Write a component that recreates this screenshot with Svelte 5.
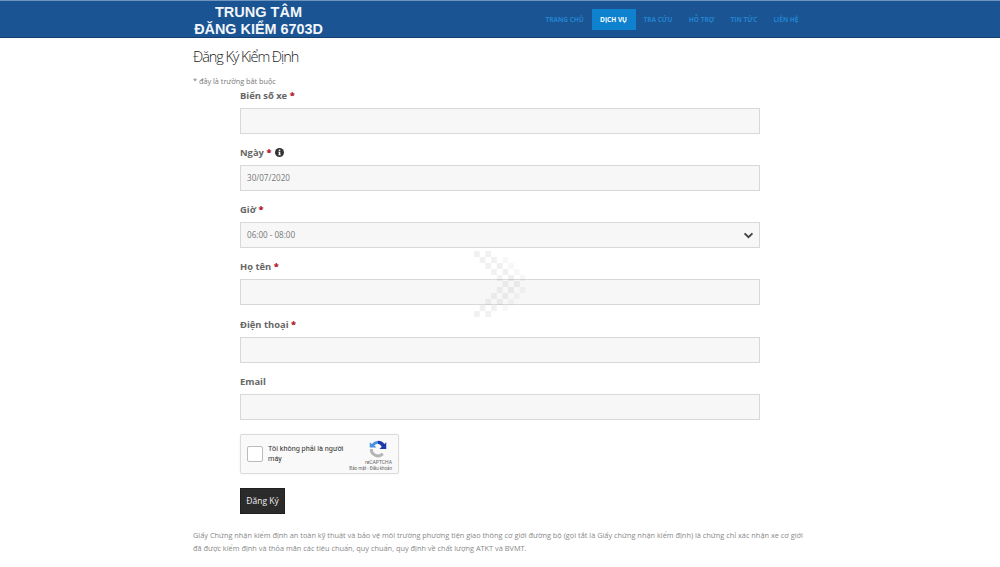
<script>
  const nav = ['TRANG CHỦ', 'DỊCH VỤ', 'TRA CỨU', 'HỖ TRỢ', 'TIN TỨC', 'LIÊN HỆ'];
  const cells = [];
  for (let r = 0; r < 11; r++) {
    for (let c = 0; c < 9; c++) {
      if ((r + c) % 2 === 0) {
        const mid = (r < 6 ? r : 10 - r) * 1.1;
        const edge = Math.abs(c - mid - 1);
        if (edge < 3) cells.push({ x: c * 5.7, y: r * 6, o: 0.15 - edge * 0.03 });
      }
    }
  }
</script>

<header class="topbar">
  <div class="inner">
    <div class="logo"><span class="l1">TRUNG TÂM</span><span>ĐĂNG KIỂM 6703D</span></div>
    <nav>
      {#each nav as item, i}
        <span class="item" class:active={i === 1}>{item}</span>
      {/each}
    </nav>
  </div>
</header>

<main>
  <h1>Đăng Ký Kiểm Định</h1>
  <p class="note">* đây là trường bắt buộc</p>
  <form>
    <div class="group">
      <div class="label">Biển số xe <b>*</b></div>
      <div class="field"></div>
    </div>
    <div class="group">
      <div class="label">Ngày <b>*</b>
        <svg class="info" viewBox="0 0 16 16" width="9" height="9"><circle cx="8" cy="8" r="8" fill="#333"/><rect x="6.8" y="3" width="2.6" height="2.4" fill="#fff"/><path d="M5.8 6.6h3.6v5h1v1.4H5.8v-1.4h1v-3.6h-1z" fill="#fff"/></svg>
      </div>
      <div class="field">30/07/2020</div>
    </div>
    <div class="group">
      <div class="label">Giờ <b>*</b></div>
      <div class="field select">06:00 - 08:00
        <svg viewBox="0 0 12 8" width="11" height="7"><path d="M1.5 1.5 6 6l4.5-4.5" fill="none" stroke="#444" stroke-width="2.2"/></svg>
      </div>
    </div>
    <div class="group">
      <div class="label">Họ tên <b>*</b></div>
      <div class="field"></div>
    </div>
    <div class="group">
      <div class="label">Điện thoại <b>*</b></div>
      <div class="field"></div>
    </div>
    <div class="group">
      <div class="label">Email</div>
      <div class="field"></div>
    </div>
    <div class="captcha">
      <div class="check"></div>
      <div class="ctext">Tôi không phải là người máy</div>
      <div class="brand">
        <svg class="rclogo" viewBox="0 0 24 24" width="18" height="18">
          <path d="M12 1a11 11 0 0 1 8.6 4.2L23 3v9h-9l3-3A7 7 0 0 0 12 5V1z" fill="#1c3aa9"/>
          <path d="M12 1v4a7 7 0 0 0-5 2.2L10 10H1V3l2.7 2.4A11 11 0 0 1 12 1z" fill="#4a90e2"/>
          <path d="M1 12h4a7 7 0 0 0 12 5l2.8 2.8A11 11 0 0 1 1 12z" fill="#b5b5b5"/>
        </svg>
        <span class="rc">reCAPTCHA</span>
        <span class="terms">Bảo mật - Điều khoản</span>
      </div>
    </div>
    <div class="btn">Đăng Ký</div>
  </form>
  <p class="foot">Giấy Chứng nhận kiểm định an toàn kỹ thuật và bảo vệ môi trường phương tiện giao thông cơ giới đường bộ (gọi tắt là Giấy chứng nhận kiểm định) là chứng chỉ xác nhận xe cơ giới đã được kiểm định và thỏa mãn các tiêu chuẩn, quy chuẩn, quy định về chất lượng ATKT và BVMT.</p>
  <svg class="loader" viewBox="0 0 52 68" width="52" height="68" aria-hidden="true">
    {#each cells as c}
      <rect x={c.x} y={c.y} width="5.7" height="6" fill="#888" opacity={c.o}/>
    {/each}
  </svg>
</main>

<style>
  :global(body) { margin: 0; background: #fff; font-family: "Open Sans", sans-serif; color: #777; }
  .topbar { height: 38px; background: #1a5493; border-top: 1px solid #6f94bd; border-bottom: 1px solid #123f73; box-sizing: border-box; overflow: hidden; }
  .inner { width: 614px; margin: 0 auto; display: flex; justify-content: space-between; }
  .logo { display: flex; flex-direction: column; align-items: center; width: 131px; flex: none; white-space: nowrap; font: bold 14.4px/16.5px "Liberation Sans", sans-serif; color: #f2f5f9; padding-top: 3px; }
  .l1 { font-size: 14.5px; }
  nav { display: flex; gap: 16.4px; margin: 8px 0 0; height: 21px; }
  .item { font-size: 6.5px; font-weight: 700; line-height: 21px; color: #2283cf; margin: 0 -8.5px; padding: 0 8.5px; white-space: nowrap; }
  .item:last-child { margin-right: 0; }
  .item.active { background: #0e82cf; color: #fff; }
  main { width: 614px; margin: 0 auto; position: relative; }
  h1 { margin: 0; padding-top: 9px; font-size: 14.5px; line-height: 20px; font-weight: 300; color: #222; letter-spacing: -1.08px; }
  .note { margin: 9px 0 0; font-size: 7.3px; line-height: 11px; color: #777; }
  form { margin: 1.8px 47px 0; width: 520px; }
  .group { margin-bottom: 12.2px; }
  .label { font-size: 9.4px; line-height: 14px; font-weight: 700; color: #666; margin-bottom: 5px; display: flex; align-items: center; gap: 2.5px; }
  .label b { color: #b3202a; }
  .info { margin-left: 1px; }
  .field { height: 26px; box-sizing: border-box; background: #f7f7f7; border: 1px solid #d8d8d8; padding: 0 6px; font-size: 8.1px; line-height: 24px; color: #777; }
  .select { display: flex; justify-content: space-between; align-items: center; padding-right: 5px; }
  .captcha { width: 159px; height: 40px; margin-top: 14px; box-sizing: border-box; background: #f9f9f9; border: 1px solid #dcdcdc; border-radius: 2px; display: flex; align-items: center; padding-left: 6px; position: relative; box-shadow: 0 0 2px rgba(0,0,0,.08); }
  .check { width: 14px; height: 14px; flex: none; background: #fff; border: 1px solid #bbb; border-radius: 2px; }
  .ctext { margin-left: 5px; width: 78px; font: 7.3px/9.5px Roboto, sans-serif; color: #333; }
  .brand { position: absolute; right: 6px; top: 5px; display: flex; flex-direction: column; align-items: flex-end; }
  .rclogo { margin-right: 5px; }
  .rc { font: 5px/7px Roboto, sans-serif; color: #666; margin-top: 1px; }
  .terms { font: 4.5px/6px Roboto, sans-serif; color: #666; white-space: nowrap; }
  .btn { width: 45px; height: 26px; margin-top: 14px; box-sizing: border-box; background: #2b2b2b; border: 1px solid #1f1f1f; color: #eee; font-size: 8.5px; line-height: 24px; text-align: center; }
  .foot { margin: 15.5px 0 0; font-size: 7.37px; line-height: 12.5px; color: #888; }
  .loader { position: absolute; left: 281px; top: 213px; }
</style>
